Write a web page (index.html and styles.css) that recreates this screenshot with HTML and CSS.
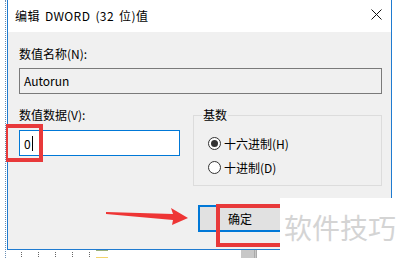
FILE: index.html
```html
<!DOCTYPE html>
<html lang="zh-CN">
<head>
    <meta charset="UTF-8">
    <title>编辑 DWORD (32 位)值</title>
    <link rel="stylesheet" href="styles.css">
</head>
<body>

<div class="page">
    <div class="dialog">
        <div class="titlebar">
            <span class="title">编辑 DWORD (32 位)值</span>
            <svg class="close" width="11" height="11" viewBox="0 0 11 11">
                <path d="M0.5 0.5 L10.5 10.5 M10.5 0.5 L0.5 10.5" stroke="#111" stroke-width="1"/>
            </svg>
        </div>

        <div class="body">
            <label class="label">数值名称(N):</label>
            <div class="field readonly">Autorun</div>

            <div class="row">
                <div class="col">
                    <label class="label">数值数据(V):</label>
                    <div class="field active">0<span class="caret"></span></div>
                </div>

                <fieldset class="group">
                    <legend>基数</legend>
                    <div class="radio"><span class="dot checked"></span>十六进制(H)</div>
                    <div class="radio"><span class="dot"></span>十进制(D)</div>
                </fieldset>
            </div>

            <div class="buttons">
                <button class="btn">确定</button>
            </div>
        </div>
    </div>

    <div class="ticks">
        <span></span><span></span><span></span><span></span><span></span>
    </div>
    <div class="bit bit-a"></div>
    <div class="bit bit-b"></div>

    <!-- annotations laid over the screenshot -->
    <div class="mark mark-value"></div>
    <div class="mark mark-ok"></div>
    <svg class="arrow" width="90" height="24" viewBox="0 0 90 24">
        <polygon points="0,4 67,6 65,0 82,10 66,17 67,12 0,6" fill="#ee3535"/>
    </svg>
    <div class="watermark">软件技巧</div>
</div>

</body>
</html>
```

FILE: styles.css
```css
body {
    margin: 0;
    background: #fff;
    font-family: "Noto Sans CJK SC", "Noto Sans", sans-serif;
    font-size: 12px;
    color: #000;
}
.page {
    position: relative;
    height: 258px;
    overflow: hidden;
    border-left: 1px dotted #6a8fb5;
    margin-left: 5px;
    box-sizing: border-box;
    width: 394px;
}
.dialog {
    margin-left: 1px;
    width: 385px;
    height: 250px;
    border: 1px solid #1f7bd0;
    border-top: none;
    box-sizing: border-box;
    display: flex;
    flex-direction: column;
}
.titlebar {
    height: 31px;
    background: #fff;
    display: flex;
    align-items: center;
    justify-content: space-between;
    padding: 0 9px 1px 7px;
}
.title {
    line-height: 16px;
    letter-spacing: 0.4px;
    word-spacing: 2px;
}
.close {
    display: block;
    margin-top: -2px;
}
.body {
    flex: 1;
    background: #f0f0f0;
    padding: 14px 9px 0 11px;
}
.label {
    display: block;
    line-height: 16px;
}
.field {
    height: 26px;
    box-sizing: border-box;
    border: 1px solid #7a7a7a;
    padding: 0 4px;
    line-height: 23px;
    margin-top: 6px;
}
.readonly {
    background: #f0f0f0;
}
.active {
    background: #fff;
    border-color: #0078d7;
    margin-top: 7px;
    display: flex;
    align-items: center;
}
.caret {
    display: inline-block;
    width: 1px;
    height: 15px;
    background: #000;
    margin-left: 1px;
}
.row {
    display: flex;
    gap: 13px;
    margin-top: 13px;
}
.col {
    width: 161px;
}
.group {
    width: 189px;
    box-sizing: border-box;
    margin: 0;
    border: 1px solid #dcdcdc;
    padding: 8px 0 6px 14px;
}
.group legend {
    line-height: 16px;
    padding: 0 1px;
    margin-left: -6px;
}
.radio {
    display: flex;
    align-items: center;
    height: 24px;
    gap: 3px;
}
.dot {
    width: 13px;
    height: 13px;
    box-sizing: border-box;
    border: 1px solid #333;
    border-radius: 50%;
    background: #fff;
    position: relative;
}
.dot.checked::after {
    content: "";
    position: absolute;
    left: 2px;
    top: 2px;
    width: 7px;
    height: 7px;
    border-radius: 50%;
    background: #333;
}
.buttons {
    margin-top: 19px;
    padding-left: 179px;
}
.btn {
    display: block;
    width: 100px;
    height: 27px;
    box-sizing: border-box;
    border: 2px solid #0078d7;
    background: #e1e1e1;
    font: inherit;
    text-align: left;
    padding: 0 0 0 28px;
    line-height: 22px;
}
.ticks {
    display: flex;
    gap: 15px;
    padding: 2px 0 0 15px;
}
.ticks span {
    width: 1px;
    height: 5px;
    border-left: 1px dotted #666;
}
.bit {
    position: absolute;
    top: 250px;
}
.bit-a {
    left: 90px;
    width: 12px;
    height: 8px;
    border-top: 1px solid #9bb07a;
    background: linear-gradient(#fff 6px, #f3d36b 6px);
    box-sizing: border-box;
}
.bit-b {
    left: 235px;
    width: 13px;
    height: 8px;
    background: #c8c8c8;
    border-right: 3px double #aaa;
}
.mark {
    position: absolute;
    border: 4px solid #e8393a;
    box-sizing: border-box;
}
.mark-value {
    left: -2px;
    top: 124px;
    width: 39px;
    height: 38px;
}
.mark-ok {
    left: 210px;
    top: 204px;
    width: 80px;
    height: 43px;
}
.arrow {
    position: absolute;
    left: 100px;
    top: 208px;
}
.watermark {
    position: absolute;
    left: 274px;
    top: 198px;
    width: 120px;
    height: 60px;
    background: #fff;
    color: #d4d4d4;
    font-size: 28px;
    line-height: 34px;
    padding: 12px 0 0 4px;
    box-sizing: border-box;
}
```
